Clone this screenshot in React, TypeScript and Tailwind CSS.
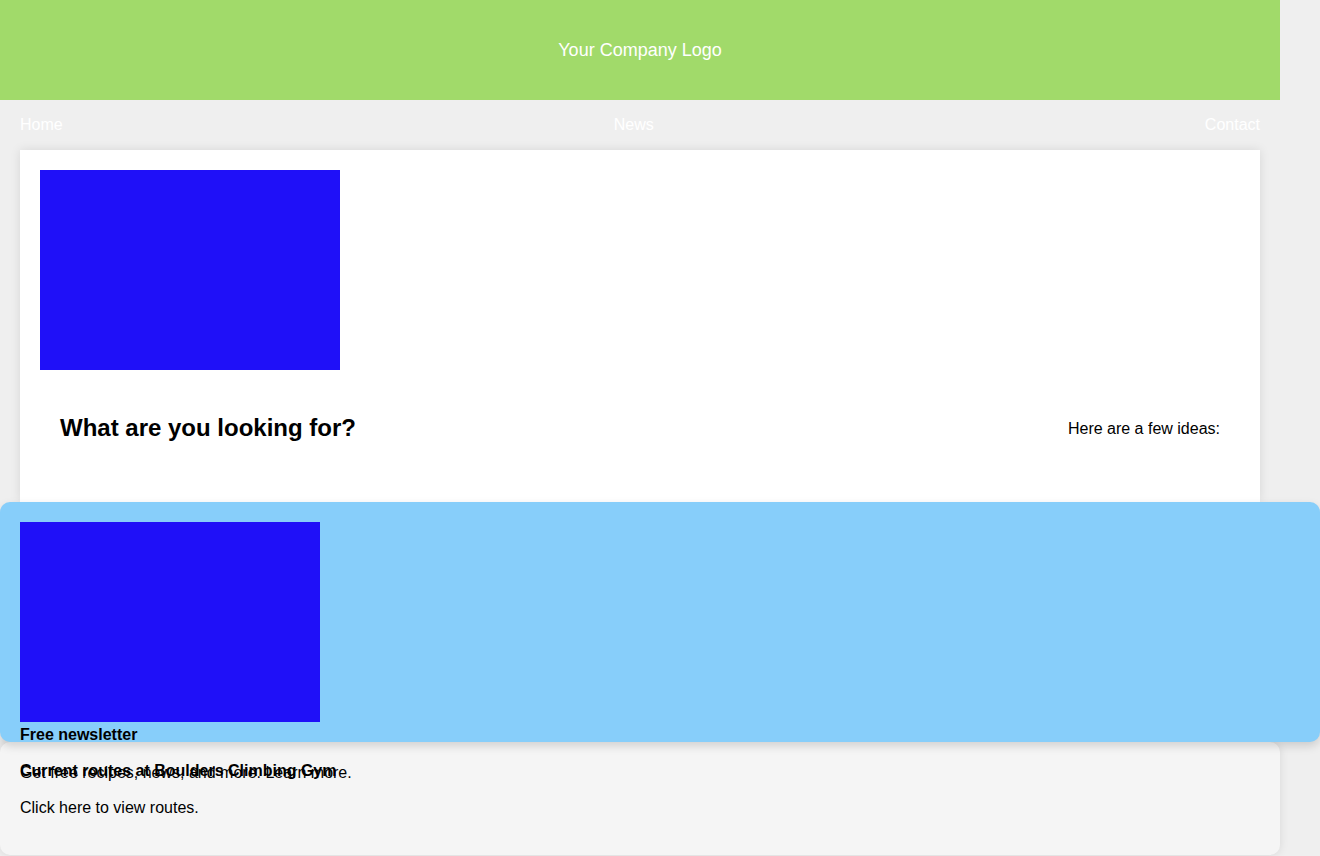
export default function App() {
  return (
    <div className="h-[856px] overflow-hidden bg-[#efefef] font-['Liberation_Sans',Arial,sans-serif] text-black">
      <div className="w-[1280px]">
        <header className="flex h-[100px] items-center justify-center bg-[#a1da6a] text-[18px] text-white">
          Your Company Logo
        </header>
        <nav className="flex h-[50px] justify-between px-5 pt-[13px] text-base leading-6 text-white">
          <a href="#">Home</a>
          <a href="#">News</a>
          <a href="#">Contact</a>
        </nav>
        <div className="mx-5 h-[352px] bg-white p-5 shadow-[0_0_10px_rgba(0,0,0,0.1)]">
          <div className="h-[200px] w-[300px] bg-[#1f10f8]" />
          <div className="mt-5 flex items-center justify-between p-5">
            <h2 className="text-2xl font-bold leading-9">What are you looking for?</h2>
            <p className="pt-px text-base">Here are a few ideas:</p>
          </div>
        </div>
      </div>

      <div className="relative z-10 h-[240px] w-[1320px] rounded-[10px] bg-[#87cefa] p-5 shadow-[0_4px_10px_rgba(0,0,0,0.15)]">
        <div className="h-[200px] w-[300px] bg-[#1f10f8]" />
        <h3 className="pt-px text-base font-bold leading-6">Free newsletter</h3>
        <p className="mt-[17px] text-base leading-[18px]">Get free recipes, news, and more. Learn more.</p>
      </div>

      <div className="h-[113px] w-[1280px] rounded-[10px] bg-[#f5f5f5] p-5 shadow-[0_0_10px_rgba(0,0,0,0.1)]">
        <h3 className="text-base font-bold leading-[18px]">Current routes at Boulders Climbing Gym</h3>
        <p className="mt-[19px] text-base leading-[18px]">Click here to view routes.</p>
      </div>
    </div>
  );
}
